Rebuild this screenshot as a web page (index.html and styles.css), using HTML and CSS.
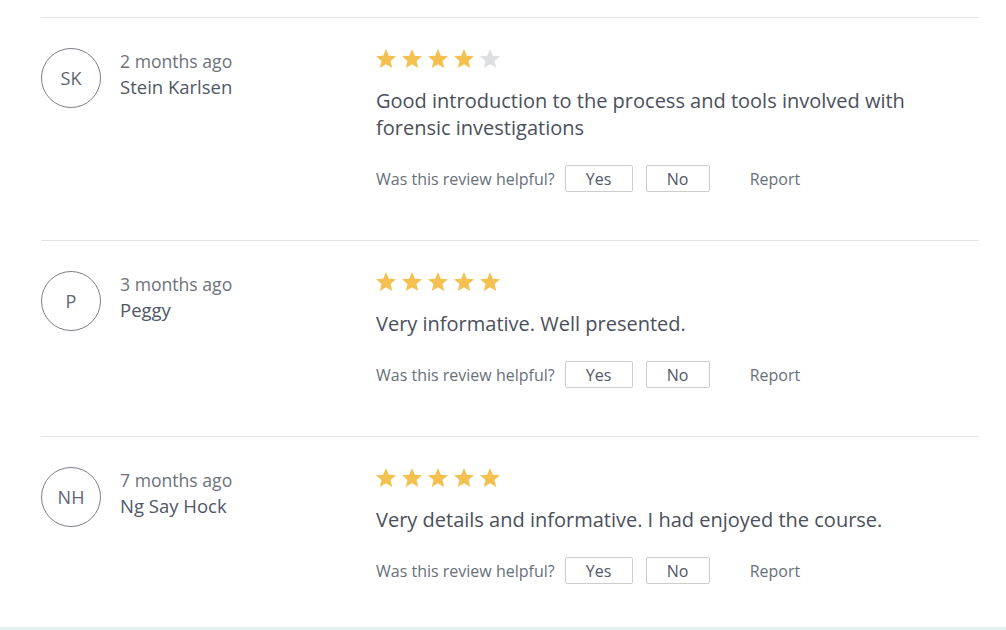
FILE: index.html
```html
<!DOCTYPE html>
<html lang="en">
<head>
<meta charset="utf-8">
<title>Reviews</title>
<link rel="stylesheet" href="styles.css">
</head>
<body>
<div class="page">
  <div class="reviews">
    <div class="review">
      <div class="author">
        <div class="avatar">SK</div>
        <div class="meta">
          <div class="date">2 months ago</div>
          <div class="name">Stein Karlsen</div>
        </div>
      </div>
      <div class="body">
        <div class="stars">
          <svg class="star on" viewBox="2 2 20 19"><path d="M12 17.27L18.18 21l-1.64-7.03L22 9.24l-7.19-.61L12 2 9.19 8.630 2 9.24l5.46 4.73L5.82 21z"/></svg>
          <svg class="star on" viewBox="2 2 20 19"><path d="M12 17.27L18.18 21l-1.64-7.03L22 9.24l-7.19-.61L12 2 9.19 8.63 2 9.24l5.46 4.73L5.82 21z"/></svg>
          <svg class="star on" viewBox="2 2 20 19"><path d="M12 17.27L18.18 21l-1.64-7.03L22 9.24l-7.19-.61L12 2 9.19 8.63 2 9.24l5.46 4.73L5.82 21z"/></svg>
          <svg class="star on" viewBox="2 2 20 19"><path d="M12 17.27L18.18 21l-1.64-7.03L22 9.24l-7.19-.61L12 2 9.19 8.63 2 9.24l5.46 4.73L5.82 21z"/></svg>
          <svg class="star off" viewBox="2 2 20 19"><path d="M12 17.27L18.18 21l-1.64-7.03L22 9.24l-7.19-.61L12 2 9.19 8.63 2 9.24l5.46 4.73L5.82 21z"/></svg>
        </div>
        <p class="text">Good introduction to the process and tools involved with forensic investigations</p>
        <div class="helpful">
          <span class="question">Was this review helpful?</span>
          <button class="btn yes">Yes</button>
          <button class="btn no">No</button>
          <a class="report">Report</a>
        </div>
      </div>
    </div>

    <div class="review">
      <div class="author">
        <div class="avatar">P</div>
        <div class="meta">
          <div class="date">3 months ago</div>
          <div class="name">Peggy</div>
        </div>
      </div>
      <div class="body">
        <div class="stars">
          <svg class="star on" viewBox="2 2 20 19"><path d="M12 17.27L18.18 21l-1.64-7.03L22 9.24l-7.19-.61L12 2 9.19 8.63 2 9.24l5.46 4.73L5.82 21z"/></svg>
          <svg class="star on" viewBox="2 2 20 19"><path d="M12 17.27L18.18 21l-1.64-7.03L22 9.24l-7.19-.61L12 2 9.19 8.63 2 9.24l5.46 4.73L5.82 21z"/></svg>
          <svg class="star on" viewBox="2 2 20 19"><path d="M12 17.27L18.18 21l-1.64-7.03L22 9.24l-7.19-.61L12 2 9.19 8.63 2 9.24l5.46 4.73L5.82 21z"/></svg>
          <svg class="star on" viewBox="2 2 20 19"><path d="M12 17.27L18.18 21l-1.64-7.03L22 9.24l-7.19-.61L12 2 9.19 8.63 2 9.24l5.46 4.73L5.82 21z"/></svg>
          <svg class="star on" viewBox="2 2 20 19"><path d="M12 17.27L18.18 21l-1.64-7.03L22 9.24l-7.19-.61L12 2 9.19 8.63 2 9.24l5.46 4.73L5.82 21z"/></svg>
        </div>
        <p class="text">Very informative. Well presented.</p>
        <div class="helpful">
          <span class="question">Was this review helpful?</span>
          <button class="btn yes">Yes</button>
          <button class="btn no">No</button>
          <a class="report">Report</a>
        </div>
      </div>
    </div>

    <div class="review">
      <div class="author">
        <div class="avatar">NH</div>
        <div class="meta">
          <div class="date">7 months ago</div>
          <div class="name">Ng Say Hock</div>
        </div>
      </div>
      <div class="body">
        <div class="stars">
          <svg class="star on" viewBox="2 2 20 19"><path d="M12 17.27L18.18 21l-1.64-7.03L22 9.24l-7.19-.61L12 2 9.19 8.63 2 9.24l5.46 4.73L5.82 21z"/></svg>
          <svg class="star on" viewBox="2 2 20 19"><path d="M12 17.27L18.18 21l-1.64-7.03L22 9.24l-7.19-.61L12 2 9.19 8.63 2 9.24l5.46 4.73L5.82 21z"/></svg>
          <svg class="star on" viewBox="2 2 20 19"><path d="M12 17.27L18.18 21l-1.64-7.03L22 9.24l-7.19-.61L12 2 9.19 8.63 2 9.24l5.46 4.73L5.82 21z"/></svg>
          <svg class="star on" viewBox="2 2 20 19"><path d="M12 17.27L18.18 21l-1.64-7.03L22 9.24l-7.19-.61L12 2 9.19 8.63 2 9.24l5.46 4.73L5.82 21z"/></svg>
          <svg class="star on" viewBox="2 2 20 19"><path d="M12 17.27L18.18 21l-1.64-7.03L22 9.24l-7.19-.61L12 2 9.19 8.63 2 9.24l5.46 4.73L5.82 21z"/></svg>
        </div>
        <p class="text">Very details and informative. I had enjoyed the course.</p>
        <div class="helpful">
          <span class="question">Was this review helpful?</span>
          <button class="btn yes">Yes</button>
          <button class="btn no">No</button>
          <a class="report">Report</a>
        </div>
      </div>
    </div>
  </div>
  <div class="footer-strip"></div>
</div>
</body>
</html>
```
FILE: styles.css
```css
html, body {
  margin: 0;
  padding: 0;
  background: #ffffff;
  font-family: "Open Sans", "Liberation Sans", sans-serif;
  color: #505763;
}

.page {
  padding-top: 17px;
}

.reviews {
  margin: 0 27px 0 41px;
}

.review {
  display: flex;
  border-top: 1px solid #e3e4e6;
  padding: 30px 0 48px;
}

.review:last-child {
  padding-bottom: 43px;
}

.author {
  width: 335px;
  flex: none;
  display: flex;
  gap: 19px;
}

.avatar {
  width: 58px;
  height: 58px;
  border: 1px solid #7b7f87;
  border-radius: 50%;
  display: flex;
  align-items: center;
  justify-content: center;
  font-size: 18px;
  color: #5d6573;
  flex: none;
}

.meta {
  line-height: 26px;
}

.date {
  font-size: 17.6px;
  color: #6d727b;
}

.name {
  font-size: 18.5px;
  color: #4f5866;
}

.body {
  flex: 1;
}

.stars {
  display: flex;
  gap: 6px;
  padding-top: 1px;
  height: 20px;
  margin-bottom: 18px;
}

.star {
  width: 20px;
  height: 19px;
}

.star.on {
  fill: #f4c150;
}

.star.off {
  fill: #dedfe0;
}

.text {
  margin: 0 0 24px;
  font-size: 20px;
  line-height: 27px;
  color: #4a505c;
  max-width: 560px;
}

.helpful {
  display: flex;
  align-items: center;
  height: 27px;
  font-size: 16px;
  color: #686f7a;
}

.question {
  margin-right: 10px;
}

.btn {
  height: 27px;
  padding: 0;
  border: 1px solid #cdcdcd;
  border-radius: 2px;
  background: #ffffff;
  font-family: inherit;
  font-size: 16px;
  color: #4f5866;
  cursor: pointer;
}

.btn.yes {
  width: 68px;
  margin-right: 13px;
}

.btn.no {
  width: 64px;
  margin-right: 40px;
}

.report {
  color: #686f7a;
}

.footer-strip {
  height: 20px;
  background: #e8f0f4;
}
```
